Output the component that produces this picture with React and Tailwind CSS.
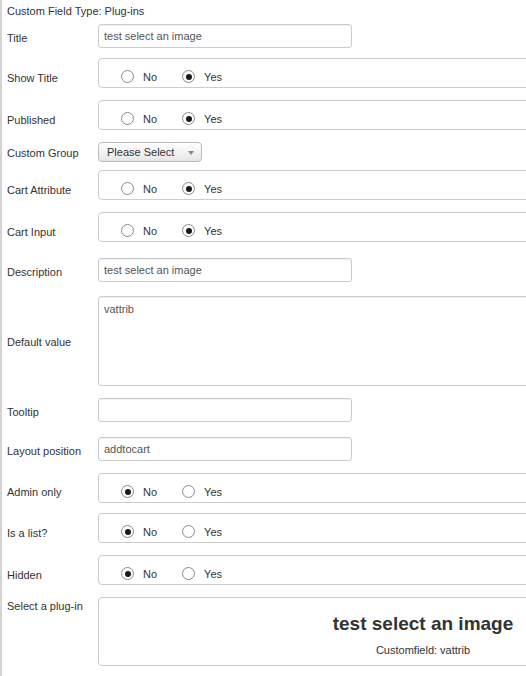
import React from "react";

const font = { fontFamily: '"Liberation Sans", Arial, sans-serif' };

function Radio({ checked, label }) {
  return (
    <label className="flex items-center">
      <span className="w-[13px] h-[13px] rounded-full border border-[#8a8a8a] bg-white flex items-center justify-center">
        {checked && <span className="w-[6px] h-[6px] rounded-full bg-[#1a1a1a]" />}
      </span>
      <span className="ml-[9px] text-[#333]">{label}</span>
    </label>
  );
}

function RadioBox({ yes }) {
  return (
    <div className="w-[650px] h-[30px] border border-[#ccc] rounded-[4px] flex items-center pt-[7px] pl-[22px]">
      <Radio checked={!yes} label="No" />
      <div className="ml-[25px]">
        <Radio checked={yes} label="Yes" />
      </div>
    </div>
  );
}

function TextInput({ value }) {
  return (
    <div className="w-[254px] h-[24px] border border-[#ccc] rounded-[3px] shadow-[inset_0_1px_1px_rgba(0,0,0,0.06)] flex items-center pl-[5px] text-[#555]">
      {value}
    </div>
  );
}

function Row({ label, mt, labelClass = "pt-[3px]", align = "items-center", children }) {
  return (
    <div className={`flex ${align} pl-[5px]`} style={{ marginTop: mt }}>
      <div className={`w-[91px] shrink-0 text-[#333] ${labelClass}`}>{label}</div>
      {children}
    </div>
  );
}

export default function App() {
  return (
    <div className="w-[526px] h-[676px] overflow-hidden bg-white" style={font}>
      <div className="w-[760px] h-full border-l-2 border-[#d4d4d4] text-[11px] leading-[14px] pt-[4px]">
        <div className="pl-[5px] text-[#333]">Custom Field Type: Plug-ins</div>

        <Row label="Title" mt={6}>
          <TextInput value="test select an image" />
        </Row>

        <Row label="Show Title" mt={10} labelClass="pt-[10px]">
          <RadioBox yes />
        </Row>

        <Row label="Published" mt={12} labelClass="pt-[10px]">
          <RadioBox yes />
        </Row>

        <Row label="Custom Group" mt={12} labelClass="pt-[2px]">
          <div className="w-[104px] h-[20px] border border-[#bbb] rounded-[4px] bg-gradient-to-b from-white to-[#e6e6e6] flex items-center justify-between pl-[8px] pr-[7px] text-[#333]">
            <span>Please Select</span>
            <span className="w-0 h-0 border-l-[3px] border-r-[3px] border-t-[4px] border-l-transparent border-r-transparent border-t-[#888] mt-[2px]" />
          </div>
        </Row>

        <Row label="Cart Attribute" mt={8} labelClass="pt-[10px]">
          <RadioBox yes />
        </Row>

        <Row label="Cart Input" mt={12} labelClass="pt-[10px]">
          <RadioBox yes />
        </Row>

        <Row label="Description" mt={16}>
          <TextInput value="test select an image" />
        </Row>

        <Row label="Default value" mt={14} labelClass="pt-[2px]">
          <div className="w-[650px] h-[90px] border border-[#ccc] rounded-[3px] shadow-[inset_0_1px_1px_rgba(0,0,0,0.06)] pl-[5px] pt-[5px] text-[#555]">
            vattrib
          </div>
        </Row>

        <Row label="Tooltip" mt={12}>
          <TextInput value="" />
        </Row>

        <Row label="Layout position" mt={15}>
          <TextInput value="addtocart" />
        </Row>

        <Row label="Admin only" mt={12} labelClass="pt-[8px]">
          <RadioBox yes={false} />
        </Row>

        <Row label="Is a list?" mt={10} labelClass="pt-[10px]">
          <RadioBox yes={false} />
        </Row>

        <Row label="Hidden" mt={12} labelClass="pt-[9px]">
          <RadioBox yes={false} />
        </Row>

        <Row label="Select a plug-in" mt={12} align="items-start" labelClass="pt-[2px]">
          <div className="w-[650px] h-[69px] border border-[#ccc] rounded-[4px] flex flex-col items-center pt-[15px]">
            <div className="text-[19px] leading-[22px] font-bold text-[#333]">test select an image</div>
            <div className="mt-[8px] text-[#333]">Customfield: vattrib</div>
          </div>
        </Row>
      </div>
    </div>
  );
}
